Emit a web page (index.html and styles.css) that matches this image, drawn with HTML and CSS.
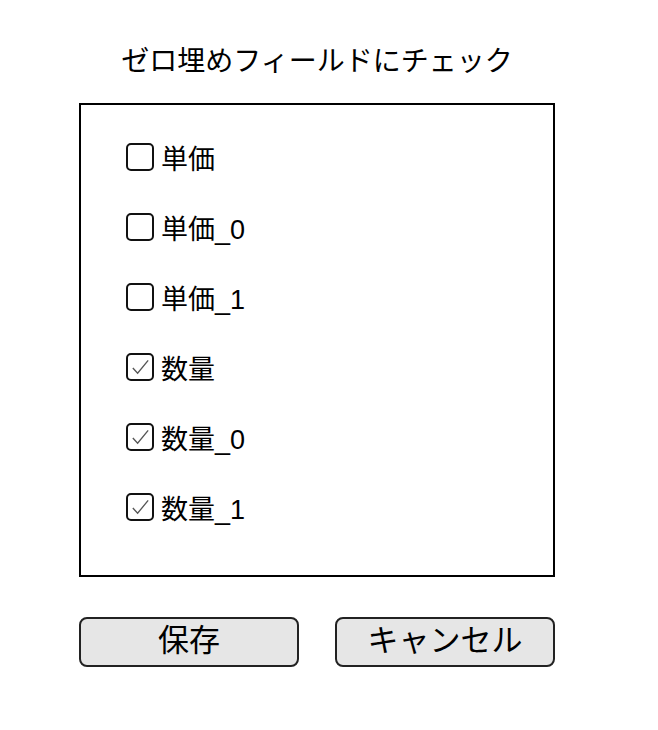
FILE: index.html
```html
<!DOCTYPE html>
<html lang="ja">
	<head>
		<meta charset="UTF-8" />
		<meta name="viewport" content="width=device-width, initial-scale=1.0" />
		<title>ゼロ埋めフィールド</title>
		<link rel="stylesheet" href="styles.css">
	</head>
	<body>
		<div class="dialog">
			<h1 class="title">ゼロ埋めフィールドにチェック</h1>

			<div class="field-box">
				<label class="field-row">
					<span class="check"></span>
					<span class="field-name">単価</span>
				</label>
				<label class="field-row">
					<span class="check"></span>
					<span class="field-name">単価_0</span>
				</label>
				<label class="field-row">
					<span class="check"></span>
					<span class="field-name">単価_1</span>
				</label>
				<label class="field-row">
					<span class="check checked">
						<svg viewBox="0 0 24 24"><path d="M4 12.5l5 5.5L20 4.5" /></svg>
					</span>
					<span class="field-name">数量</span>
				</label>
				<label class="field-row">
					<span class="check checked">
						<svg viewBox="0 0 24 24"><path d="M4 12.5l5 5.5L20 4.5" /></svg>
					</span>
					<span class="field-name">数量_0</span>
				</label>
				<label class="field-row">
					<span class="check checked">
						<svg viewBox="0 0 24 24"><path d="M4 12.5l5 5.5L20 4.5" /></svg>
					</span>
					<span class="field-name">数量_1</span>
				</label>
			</div>

			<div class="actions">
				<button class="btn">保存</button>
				<button class="btn">キャンセル</button>
			</div>
		</div>
	</body>
</html>
```

FILE: styles.css
```css
* {
	box-sizing: border-box;
}

body {
	margin: 0;
	background: #fff;
	color: #000;
	font-family: 'Liberation Sans', 'Noto Sans CJK JP', sans-serif;
}

.dialog {
	width: 476px;
	margin: 42px 0 0 79px;
}

.title {
	margin: 0 0 21px;
	font-size: 28px;
	font-weight: normal;
	line-height: 40px;
	text-align: center;
}

.field-box {
	height: 474px;
	border: 2px solid #000;
	padding: 17px 0 0 45px;
}

.field-row {
	display: flex;
	align-items: center;
	height: 70px;
	gap: 7px;
	font-size: 27px;
}

.check {
	flex: none;
	width: 28px;
	height: 28px;
	border: 2px solid #111;
	border-radius: 5px;
	display: flex;
	align-items: center;
	justify-content: center;
}

.check svg {
	flex: none;
	width: 23px;
	height: 23px;
	fill: none;
	stroke: #555;
	stroke-width: 1.4;
}

.actions {
	display: flex;
	justify-content: space-between;
	margin-top: 40px;
}

.btn {
	width: 220px;
	height: 50px;
	background: #e6e6e6;
	border: 2px solid #222;
	border-radius: 8px;
	font-family: inherit;
	font-size: 31px;
	line-height: 1;
	color: #000;
	padding: 0 0 4px;
}
```
